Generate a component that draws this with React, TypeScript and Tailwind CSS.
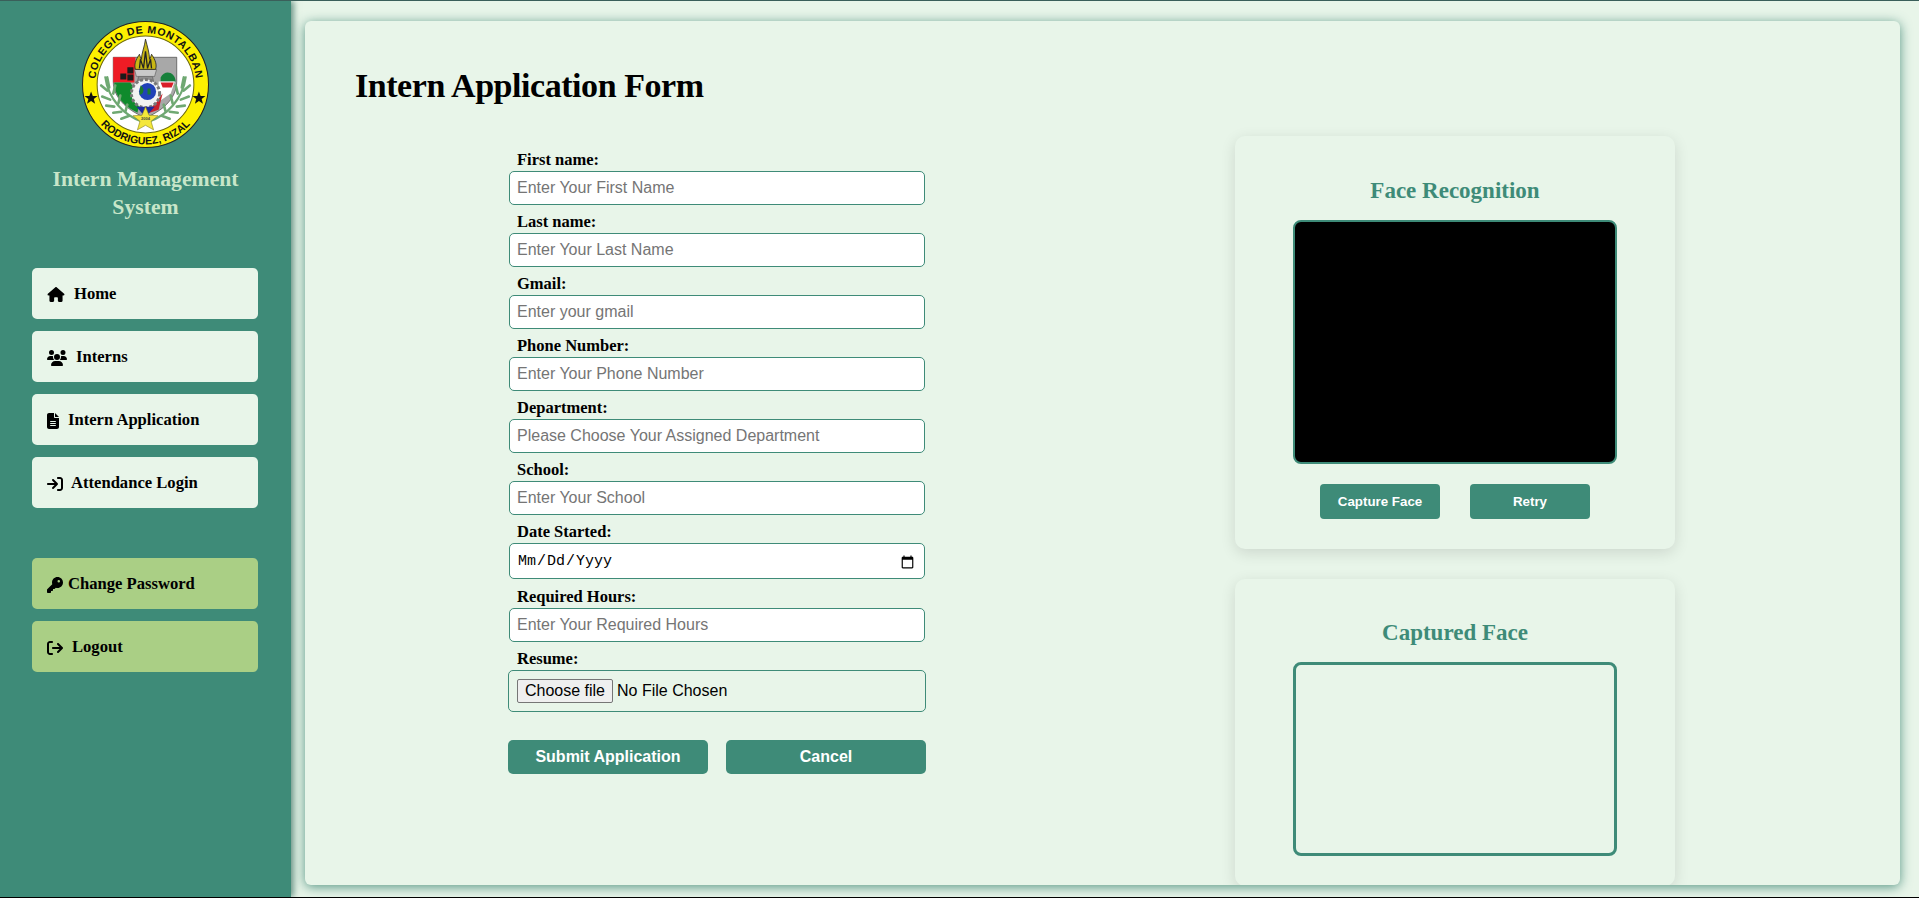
import { FaHouse, FaUsers, FaFileLines, FaArrowRightToBracket, FaKey, FaArrowRightFromBracket } from "react-icons/fa6";

const navItems = [
  { label: "Home", icon: FaHouse, iconClass: "w-[18px] h-[15px]", gap: "ml-[9px]" },
  { label: "Interns", icon: FaUsers, iconClass: "w-[20px] h-[16px]", gap: "ml-[9px]" },
  { label: "Intern Application", icon: FaFileLines, iconClass: "w-[12px] h-[16px]", gap: "ml-[9px]" },
  { label: "Attendance Login", icon: FaArrowRightToBracket, iconClass: "w-[16px] h-[16px]", gap: "ml-[8px]" },
];

const accountItems = [
  { label: "Change Password", icon: FaKey, iconClass: "w-[16px] h-[16px]", gap: "ml-[5px]" },
  { label: "Logout", icon: FaArrowRightFromBracket, iconClass: "w-[16px] h-[16px]", gap: "ml-[9px]" },
];

const topFields = [
  { label: "First name:", placeholder: "Enter Your First Name" },
  { label: "Last name:", placeholder: "Enter Your Last Name" },
  { label: "Gmail:", placeholder: "Enter your gmail" },
  { label: "Phone Number:", placeholder: "Enter Your Phone Number" },
  { label: "Department:", placeholder: "Please Choose Your Assigned Department" },
  { label: "School:", placeholder: "Enter Your School" },
];

const serif = "font-['Liberation_Serif',serif]";
const sans = "font-['Liberation_Sans',sans-serif]";

function Logo() {
  return (
    <svg viewBox="0 0 126 126" className="w-[127px] h-[127px]">
      <defs>
        <path id="topArc" d="M 14 72 A 50 50 0 1 1 112 72" />
        <path id="bottomArc" d="M 14 97 A 60 60 0 0 0 112 97" />
      </defs>
      <circle cx="63" cy="63" r="62.5" fill="#fdf000" stroke="#222" strokeWidth="1" />
      <circle cx="63" cy="63" r="48" fill="#fff" stroke="#6d6a10" strokeWidth="1" />
      <text fill="#111" fontSize="10.5" fontWeight="700" letterSpacing="0.6" fontFamily="Liberation Sans, sans-serif">
        <textPath href="#topArc" startOffset="50%" textAnchor="middle">COLEGIO DE MONTALBAN</textPath>
      </text>
      <text fill="#111" fontSize="10.5" fontWeight="700" fontFamily="Liberation Sans, sans-serif">
        <textPath href="#bottomArc" startOffset="50%" textAnchor="middle">RODRIGUEZ, RIZAL</textPath>
      </text>
      <polygon points="8,71 9.7,75.5 14.5,75.5 10.7,78.5 12,83 8,80.3 4,83 5.3,78.5 1.5,75.5 6.3,75.5" fill="#111" transform="translate(1 -1)" />
      <polygon points="117,71 118.7,75.5 123.5,75.5 119.7,78.5 121,83 117,80.3 113,83 114.3,78.5 110.5,75.5 115.3,75.5" fill="#111" transform="translate(-1 -1)" />
      {/* shield */}
      <path d="M31 36 H94 V60 C94 78 78 90 63 96 C48 90 31 78 31 60 Z" fill="#a8a8a8" stroke="#333" strokeWidth="0.6" />
      <path d="M31 36 H53 V48 H52 V61 H31 Z" fill="#ee1c25" />
      <path d="M32 61 H48 L58 78 L55 91 C43 85 32 75 32 61 Z" fill="#0f8a2c" />
      <path d="M45 46 h6 v6 h-6 z M38 52 h6 v6 h-6 z M45 53 h6 v6 h-6 z" fill="#1a1a1a" />
      <path d="M78 56 C82 48 92 50 93 60 H78 Z" fill="#16803a" />
      <path d="M76 60 H92 L88 72 L76 80 Z" fill="#fff" />
      <path d="M78 61 H91 L89 66 H80 Z" fill="#d81e28" />
      <path d="M72 82 L80 72 L76 88 L64 92 Z" fill="#c9202c" />
      {/* torch */}
      <path d="M56 55 H70 L72 66 H54 Z" fill="#8e8e8e" stroke="#444" strokeWidth="0.5" />
      <path d="M52 48 H74 L72 55 H54 Z" fill="#c9c9c9" stroke="#444" strokeWidth="0.5" />
      <path d="M53 48 C51 42 55 36 57 33 C58 36 58 37 59 38 C59 32 62 26 63 18 C65 26 67 32 67 38 C68 37 68 36 69 33 C71 36 75 42 73 48 Z" fill="#c9b714" stroke="#222" strokeWidth="0.8" />
      <path d="M57 47 L58 38 L61 47 L63 30 L65 47 L68 38 L69 47" fill="none" stroke="#222" strokeWidth="1.3" />
      {/* gear and globe */}
      <circle cx="63" cy="72" r="14" fill="#f2f2f2" stroke="#777" strokeWidth="3" strokeDasharray="3 2" />
      <circle cx="65" cy="70" r="8.5" fill="#2141b8" />
      <path d="M58 64 C63 66 61 74 57 73 Z M65 67 h3 v6 h-3 z" fill="#1b7a2f" />
      <path d="M54 85 H72 L66 92 H60 Z" fill="#1d2aa0" />
      {/* laurels */}
      <path d="M23 55 C26 78 42 94 60 100" fill="none" stroke="#6fa872" strokeWidth="2.2" />
      <path d="M103 55 C100 78 84 94 66 100" fill="none" stroke="#6fa872" strokeWidth="2.2" />
      <path d="M19 64 l6 5 M25 56 l2 10 M20 75 l8 3 M24 84 l8 1 M31 91 l8 -1 M39 97 l8 -3 M31 72 l2 -8 M36 82 l2 -8 M43 90 l2 -7" stroke="#6fa872" strokeWidth="2.6" strokeLinecap="round" />
      <path d="M107 64 l-6 5 M101 56 l-2 10 M106 75 l-8 3 M102 84 l-8 1 M95 91 l-8 -1 M87 97 l-8 -3 M95 72 l-2 -8 M90 82 l-2 -8 M83 90 l-2 -7" stroke="#6fa872" strokeWidth="2.6" strokeLinecap="round" />
      {/* bottom star */}
      <polygon points="63,85 66.5,93.5 75.5,94 68.5,99.5 71,108 63,103.5 55,108 57.5,99.5 50.5,94 59.5,93.5" fill="#f4e73a" stroke="#8b8414" strokeWidth="0.6" />
      <text x="63" y="98.5" textAnchor="middle" fontSize="4" fontWeight="700" fill="#444" fontFamily="Liberation Sans, sans-serif">2004</text>
    </svg>
  );
}

function Sidebar() {
  return (
    <aside className="w-[291px] shrink-0 bg-[#3e8b78] shadow-[3px_0_6px_rgba(30,90,75,0.6)] z-10 flex flex-col items-center pt-[20px]">
      <Logo />
      <h2 className={`${serif} mt-[17px] w-[230px] text-center text-[21.7px] leading-[28px] font-bold text-[#c8e6c9]`}>
        Intern Management System
      </h2>
      <nav className="mt-[47px] self-start ml-[32px] flex flex-col gap-[12px]">
        {navItems.map((item) => (
          <NavButton key={item.label} item={item} bg="bg-[#e8f5e9]" />
        ))}
      </nav>
      <nav className="mt-[50px] self-start ml-[32px] flex flex-col gap-[12px]">
        {accountItems.map((item) => (
          <NavButton key={item.label} item={item} bg="bg-[#aacf85]" />
        ))}
      </nav>
    </aside>
  );
}

function NavButton({ item, bg }: { item: (typeof navItems)[number]; bg: string }) {
  const Icon = item.icon;
  return (
    <a className={`${bg} w-[226px] h-[51px] rounded-[5px] pl-[15px] pt-[2px] flex items-center text-black`}>
      <Icon className={item.iconClass} />
      <span className={`${serif} ${item.gap} text-[16.6px] font-bold`}>{item.label}</span>
    </a>
  );
}

function FormLabel({ text, className = "" }: { text: string; className?: string }) {
  return (
    <label className={`${serif} block h-[28px] pl-[9px] pt-[6px] text-[16.5px] leading-[22px] font-bold text-black ${className}`}>
      {text}
    </label>
  );
}

const inputClass = "block w-[416px] mx-px bg-white border border-[#3e8b78] rounded-[5px] px-[7px] text-black outline-none";

function ApplicationForm() {
  return (
    <form className="ml-[203px] w-[418px] pt-[7px]">
      {topFields.map((field) => (
        <div key={field.label}>
          <FormLabel text={field.label} />
          <input type="text" placeholder={field.placeholder} className={`${inputClass} ${sans} text-[16px] placeholder:text-[#757575] h-[34px]`} />
        </div>
      ))}
      <FormLabel text="Date Started:" />
      <input type="date" className={`${inputClass} h-[36px] pt-[3px] capitalize font-['Liberation_Mono',monospace] text-[15px]`} />
      <FormLabel text="Required Hours:" className="h-[29px] pt-[7px]" />
      <input type="text" placeholder="Enter Your Required Hours" className={`${inputClass} ${sans} text-[16px] placeholder:text-[#757575] h-[34px]`} />
      <FormLabel text="Resume:" />
      <label className={`${sans} flex items-center w-[418px] h-[42px] border border-[#3e8b78] rounded-[5px] px-[8px] text-[16px] text-black`}>
        <input type="file" className="hidden" />
        <span className="flex items-center justify-center w-[96px] h-[24px] border border-[#767676] rounded-[2px] bg-[#efefef]">Choose file</span>
        <span className="ml-[4px]">No File Chosen</span>
      </label>
      <div className="mt-[28px] flex gap-[18px]">
        <button type="button" className={`${sans} w-[200px] h-[34px] rounded-[5px] bg-[#3e8b78] text-white text-[16px] font-bold`}>
          Submit Application
        </button>
        <button type="button" className={`${sans} w-[200px] h-[34px] rounded-[5px] bg-[#3e8b78] text-white text-[16px] font-bold`}>
          Cancel
        </button>
      </div>
    </form>
  );
}

function FacePanels() {
  return (
    <div className="ml-[309px] w-[440px] flex flex-col gap-[30px]">
      <section className="rounded-[10px] bg-[#e8f5e9] shadow-[0_4px_15px_rgba(0,0,0,0.12)] pt-[41px] pb-[30px] flex flex-col items-center">
        <h3 className={`${serif} text-[23px] leading-[28px] font-bold text-[#3e8b78]`}>Face Recognition</h3>
        <div className="mt-[15px] w-[324px] h-[244px] bg-black border-2 border-[#3e8b78] rounded-[8px]" />
        <div className="mt-[20px] flex gap-[30px]">
          <button type="button" className={`${sans} w-[120px] h-[35px] rounded-[4px] bg-[#3e8b78] text-white text-[13.33px] font-bold`}>
            Capture Face
          </button>
          <button type="button" className={`${sans} w-[120px] h-[35px] rounded-[4px] bg-[#3e8b78] text-white text-[13.33px] font-bold`}>
            Retry
          </button>
        </div>
      </section>
      <section className="rounded-[10px] bg-[#e8f5e9] shadow-[0_4px_15px_rgba(0,0,0,0.12)] pt-[40px] pb-[30px] flex flex-col items-center">
        <h3 className={`${serif} text-[23px] leading-[28px] font-bold text-[#3e8b78]`}>Captured Face</h3>
        <div className="mt-[15px] w-[324px] h-[194px] border-[3px] border-[#3e8b78] rounded-[8px]" />
      </section>
    </div>
  );
}

export default function App() {
  return (
    <div className="h-[898px] w-full flex overflow-hidden bg-[#e8f5e9] border-t border-t-[#3a5f5a] border-b border-b-black">
      <Sidebar />
      <main className="flex-1 min-w-0 pl-[14px] pr-[19px] pt-[20px] pb-[12px] flex">
        <div className="flex-1 min-w-0 rounded-[6px] bg-[#e8f5e9] shadow-[0_2px_12px_rgba(50,125,108,0.8)] overflow-hidden">
          <h1 className={`${serif} pl-[50px] pt-[45px] text-[34px] leading-[40px] font-bold tracking-[-0.45px] text-black`}>
            Intern Application Form
          </h1>
          <div className="mt-[30px] flex items-start">
            <ApplicationForm />
            <FacePanels />
          </div>
        </div>
      </main>
    </div>
  );
}
